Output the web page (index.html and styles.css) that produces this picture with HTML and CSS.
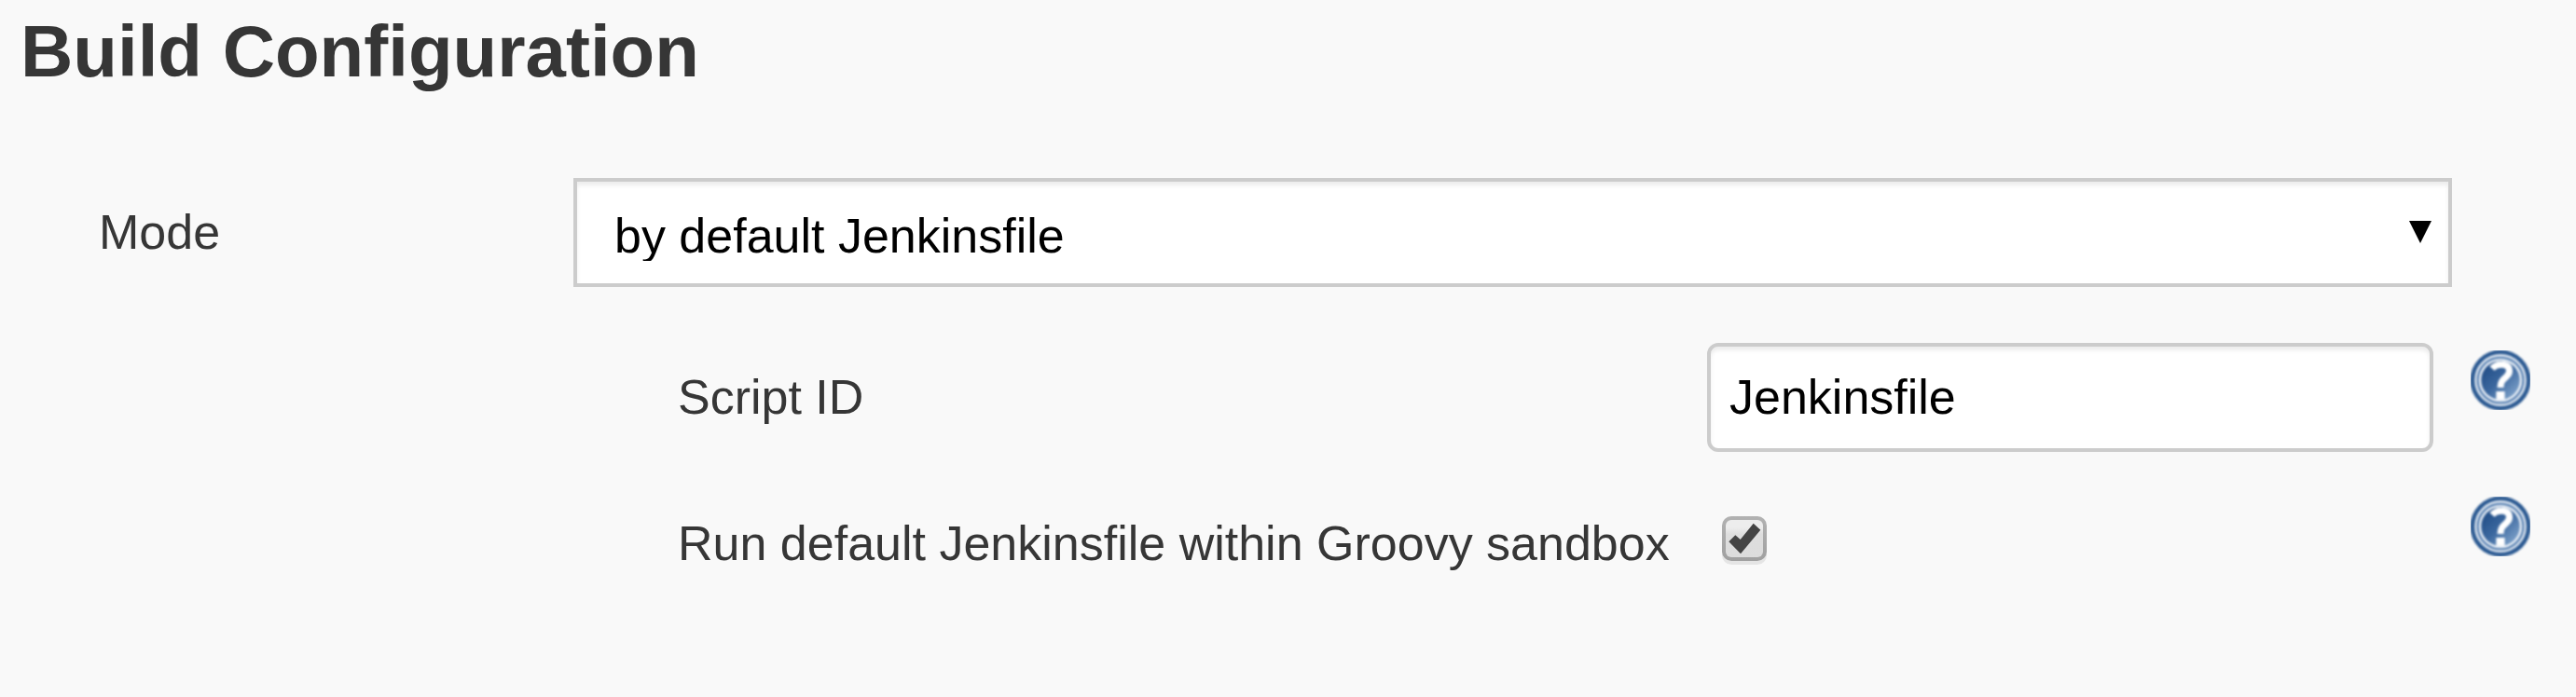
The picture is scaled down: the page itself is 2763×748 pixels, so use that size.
FILE: index.html
```html
<!DOCTYPE html>
<html lang="en">
<head>
<meta charset="utf-8">
<title>Build Configuration</title>
<link rel="stylesheet" href="styles.css">
</head>
<body>
<svg class="defs" width="0" height="0" aria-hidden="true">
  <defs>
    <linearGradient id="disc" x1="0.15" y1="0.2" x2="0.85" y2="0.9">
      <stop offset="0" stop-color="#245089"/>
      <stop offset="0.45" stop-color="#3b679e"/>
      <stop offset="1" stop-color="#7fa3cb"/>
    </linearGradient>
    <filter id="soft" x="0" y="0" width="64" height="64" filterUnits="userSpaceOnUse" color-interpolation-filters="sRGB"><feGaussianBlur stdDeviation="1.1"/></filter>
    <symbol id="help" viewBox="0 0 64 64">
      <g filter="url(#soft)">
        <circle cx="32" cy="32" r="32.5" fill="#2c5a92"/>
        <circle cx="32" cy="32" r="26.6" fill="#4a76ab" stroke="#dce5f0" stroke-width="2.6"/>
        <circle cx="32" cy="32" r="22" fill="url(#disc)" stroke="#eaf0f7" stroke-width="2.6"/>
        <path d="M23 19.5C26 16 31 14.8 35 15.3C43 16.5 43 24 38.5 28C34.5 31.5 32 33.5 32 40" fill="none" stroke="#fff" stroke-width="7"/>
        <rect x="27.4" y="44" width="9.2" height="8.8" fill="#fff"/>
      </g>
    </symbol>
  </defs>
</svg>
<main class="config">
  <h1 class="title">Build Configuration</h1>
  <div class="row row-mode">
    <span class="label label-mode">Mode</span>
    <div class="select">
      <span class="select-value">by default Jenkinsfile</span>
      <svg class="arrow" viewBox="0 0 24 24"><path d="M0 0H24L12 24Z"/></svg>
    </div>
  </div>
  <div class="row row-script">
    <label class="label label-sub" for="script">Script ID</label>
    <input class="input" id="script" type="text" value="Jenkinsfile">
    <svg class="help"><use href="#help"/></svg>
  </div>
  <div class="row row-sandbox">
    <span class="label label-sub">Run default Jenkinsfile within Groovy sandbox</span>
    <span class="checkbox" role="checkbox" aria-checked="true">
      <svg class="check" viewBox="0 0 48 48"><path d="M7.3 27.3L14.3 20.3L19.7 25L33.7 7.7L41.3 14.7L20 40.3Z"/></svg>
    </span>
    <svg class="help help-last"><use href="#help"/></svg>
  </div>
</main>
</body>
</html>
```
FILE: styles.css
```css
* { box-sizing: border-box; }
body {
  margin: 0;
  background: #f9f9f9;
  color: #363636;
  font: 52px/60px "Liberation Sans", Arial, sans-serif;
}
.defs { position: absolute; }
.config { height: 748px; overflow: hidden; }
.title {
  margin: 0;
  padding: 10px 0 0 22px;
  height: 191px;
  font-size: 78px;
  line-height: 90px;
  font-weight: bold;
}
.row { display: flex; align-items: flex-start; }
.row-mode { height: 177px; }
.row-script { height: 165px; }
.label { flex: none; white-space: nowrap; }
.label-mode { width: 615px; padding: 28px 0 0 106px; }
.label-sub { width: 1831px; padding: 28px 0 0 727px; }
.select, .input {
  height: 117px;
  border: 4px solid #ccc;
  background: #fff;
  color: #000;
  box-shadow: inset 0 4px 4px rgba(0, 0, 0, 0.075);
}
.select {
  display: flex;
  justify-content: space-between;
  width: 2015px;
  padding: 28px 18px 0 40px;
}
.select-value { height: 57px; overflow: hidden; }
.arrow { width: 24px; height: 24px; margin-top: 14px; }
.input {
  width: 779px;
  margin: 0;
  padding: 0 20px 2px;
  border-radius: 12px;
  font: inherit;
  outline: none;
}
.help { flex: none; width: 64px; height: 64px; margin: 8px 0 0 40px; }
.help-last { margin: 0 0 0 755px; }
.row-sandbox .label-sub { padding-top: 20px; }
.checkbox {
  flex: none;
  width: 48px;
  height: 48px;
  margin: 21px 0 0 16px;
  border: 4px solid transparent;
  border-radius: 10px;
  background: linear-gradient(#ededed, #ededed 20%, #dedede 38%, #dcdcdc) padding-box,
    linear-gradient(#b2b2b2, #a0a0a0) border-box;
  box-shadow: 0 4px 0 rgba(0, 0, 0, 0.08);
}
.check { display: block; width: 48px; height: 48px; margin: -4px; fill: #444; }
```
